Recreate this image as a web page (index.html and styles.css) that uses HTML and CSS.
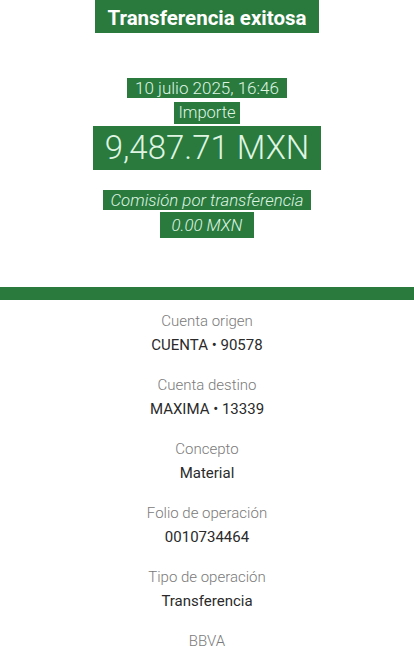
FILE: index.html
```html
<!doctype html>
<html>
<head>
  <title>Transferencia exitosa</title>
  <link rel="stylesheet" href="styles.css">
</head>
<body>
  <div id="hero">
    <span class="mark title">Transferencia exitosa</span>
    <span class="mark date">10 julio 2025, 16:46</span>
    <span class="mark label">Importe</span>
    <span class="mark amount">9,487.71 MXN</span>
    <span class="mark fee">Comisión por transferencia</span>
    <span class="mark fee feeValue">0.00 MXN</span>
  </div>

  <div id="bar"></div>

  <div id="details">
    <div class="row">
      <p class="key">Cuenta origen</p>
      <p class="val">CUENTA • 90578</p>
    </div>
    <div class="row">
      <p class="key">Cuenta destino</p>
      <p class="val">MAXIMA • 13339</p>
    </div>
    <div class="row">
      <p class="key">Concepto</p>
      <p class="val">Material</p>
    </div>
    <div class="row">
      <p class="key">Folio de operación</p>
      <p class="val">0010734464</p>
    </div>
    <div class="row">
      <p class="key">Tipo de operación</p>
      <p class="val">Transferencia</p>
    </div>
    <div class="row">
      <p class="key">BBVA</p>
    </div>
  </div>
</body>
</html>
```

FILE: styles.css
```css
body {
  margin: 0;
  background: #fff;
  font-family: Roboto, "Open Sans", sans-serif;
  overflow: hidden;
}

#hero {
  height: 287px;
  display: flex;
  flex-direction: column;
  align-items: center;
}

.mark {
  background: #2a7a3e;
  color: #dff5e2;
  display: inline-block;
}

.title {
  color: #fff;
  font-weight: 700;
  font-size: 20.5px;
  line-height: 24px;
  padding: 6px 12px 3px;
}

.date {
  margin-top: 45px;
  font-weight: 300;
  font-size: 17px;
  line-height: 20px;
  padding: 0 8px;
}

.label {
  margin-top: 4px;
  font-weight: 300;
  font-size: 16.5px;
  line-height: 22px;
  padding: 0 4px;
}

.amount {
  margin-top: 2px;
  font-weight: 300;
  font-size: 33px;
  line-height: 44px;
  padding: 0 12px;
}

.fee {
  margin-top: 20px;
  font-weight: 300;
  font-style: italic;
  font-size: 16.8px;
  line-height: 20px;
  padding: 0 8px;
}

.feeValue {
  margin-top: 2px;
  line-height: 26px;
  padding: 0 12px;
}

#bar {
  height: 13px;
  background: #2a7a3e;
}

#details {
  padding-top: 10px;
  text-align: center;
}

.row {
  margin-bottom: 18px;
}

.row p {
  margin: 0;
  font-size: 15px;
  line-height: 22px;
}

.key {
  color: #7a7a7a;
  font-weight: 300;
}

.val {
  color: #2a2a2a;
  margin-top: 2px !important;
}
```
